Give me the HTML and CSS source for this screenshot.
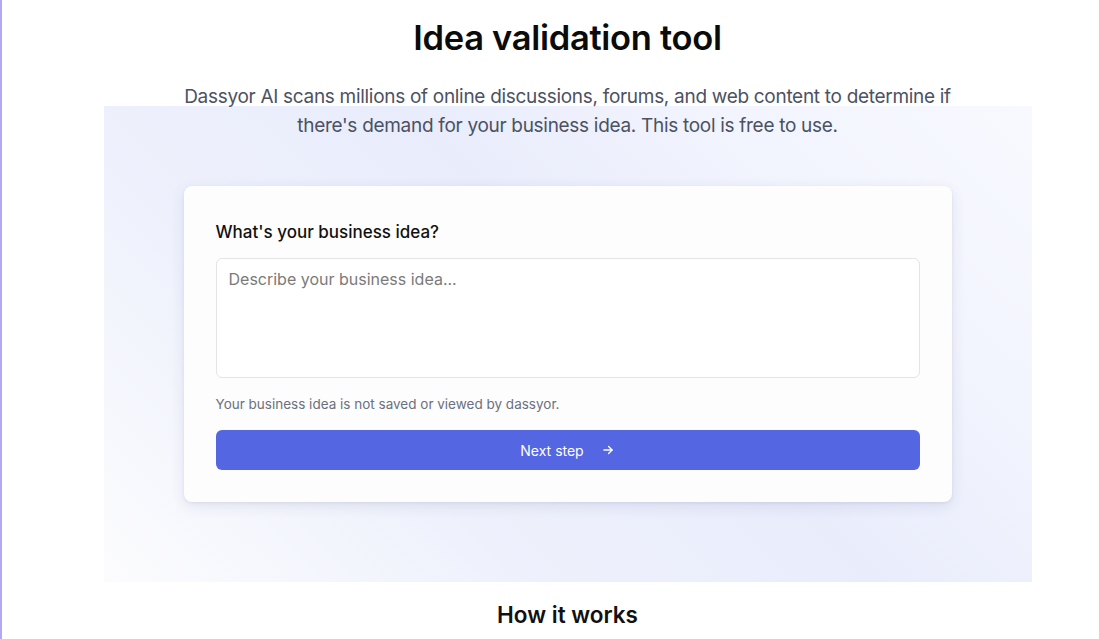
FILE: index.html
```html
<!DOCTYPE html>
<html lang="en">
<head>
<meta charset="utf-8">
<title>Idea validation tool</title>
<link rel="stylesheet" href="styles.css">
</head>
<body>
<main class="page">
  <header class="hero">
    <h1 class="title">Idea validation tool</h1>
    <p class="subtitle">Dassyor AI scans millions of online discussions, forums, and web content to determine if there's demand for your business idea. This tool is free to use.</p>
  </header>
  <section class="panel">
    <form class="card">
      <label class="label" for="idea">What's your business idea?</label>
      <textarea id="idea" class="input" placeholder="Describe your business idea..."></textarea>
      <p class="hint">Your business idea is not saved or viewed by dassyor.</p>
      <button type="button" class="btn">
        <span>Next step</span>
        <svg class="arrow" width="14" height="14" viewBox="0 0 24 24" fill="none" stroke="currentColor" stroke-width="2.2" stroke-linecap="round" stroke-linejoin="round"><path d="M5 12h14"/><path d="M13 6l6 6-6 6"/></svg>
      </button>
    </form>
  </section>
  <h2 class="section-title">How it works</h2>
</main>
</body>
</html>
```

FILE: styles.css
```css
* { box-sizing: border-box; }
html, body { height: 100%; }
body {
  margin: 0;
  background: #ffffff;
  border-left: 2px solid #b3a7f6;
  font-family: Inter, "Noto Sans", "Liberation Sans", sans-serif;
  color: #111111;
  overflow: hidden;
}
.page {
  padding-left: 34px;
  display: flex;
  flex-direction: column;
  align-items: center;
}
.hero {
  position: relative;
  z-index: 1;
  padding-top: 18px;
  display: flex;
  flex-direction: column;
  align-items: center;
}
.title {
  margin: 0;
  font-size: 34.5px;
  line-height: 40px;
  font-weight: 600;
  letter-spacing: -0.3px;
  color: #0b0b0c;
}
.subtitle {
  margin: 24px 0 0;
  max-width: 790px;
  text-align: center;
  font-size: 19px;
  line-height: 29px;
  letter-spacing: -0.3px;
  color: #4b5263;
}
.panel {
  margin-top: -34px;
  width: 928px;
  padding: 80px 0;
  display: flex;
  justify-content: center;
  background: linear-gradient(45deg, #fcfcfe 0%, #eef1fc 30%, #e9ecfb 55%, #f3f5fe 80%, #f8f9fe 100%);
}
.card {
  width: 768px;
  padding: 34px 32px 32px;
  background: #fdfdfd;
  border-radius: 8px;
  box-shadow: 0 4px 14px rgba(60, 70, 120, 0.12), 0 1px 3px rgba(60, 70, 120, 0.08);
  display: flex;
  flex-direction: column;
  margin: 0;
}
.label {
  font-size: 17px;
  line-height: 24px;
  font-weight: 500;
  color: #111111;
}
.input {
  margin-top: 14px;
  height: 120px;
  resize: none;
  border: 1px solid #e3e4e8;
  border-radius: 6px;
  padding: 8px 12px;
  font-family: inherit;
  font-size: 16px;
  line-height: 24px;
  background: #ffffff;
  color: #111;
}
.input::placeholder { color: #7a7a7a; }
.hint {
  margin: 16px 0 0;
  font-size: 13.5px;
  line-height: 20px;
  color: #6b7080;
}
.btn {
  margin-top: 16px;
  height: 40px;
  border: 0;
  border-radius: 6px;
  background: #5566e3;
  color: #ffffff;
  font-family: inherit;
  font-size: 14px;
  font-weight: 400;
  display: flex;
  align-items: center;
  justify-content: center;
  gap: 17px;
  padding-left: 6px;
}
.arrow { display: block; }
.section-title {
  margin: 17px 0 0;
  font-size: 22.5px;
  line-height: 32px;
  font-weight: 600;
  color: #111111;
}
```
